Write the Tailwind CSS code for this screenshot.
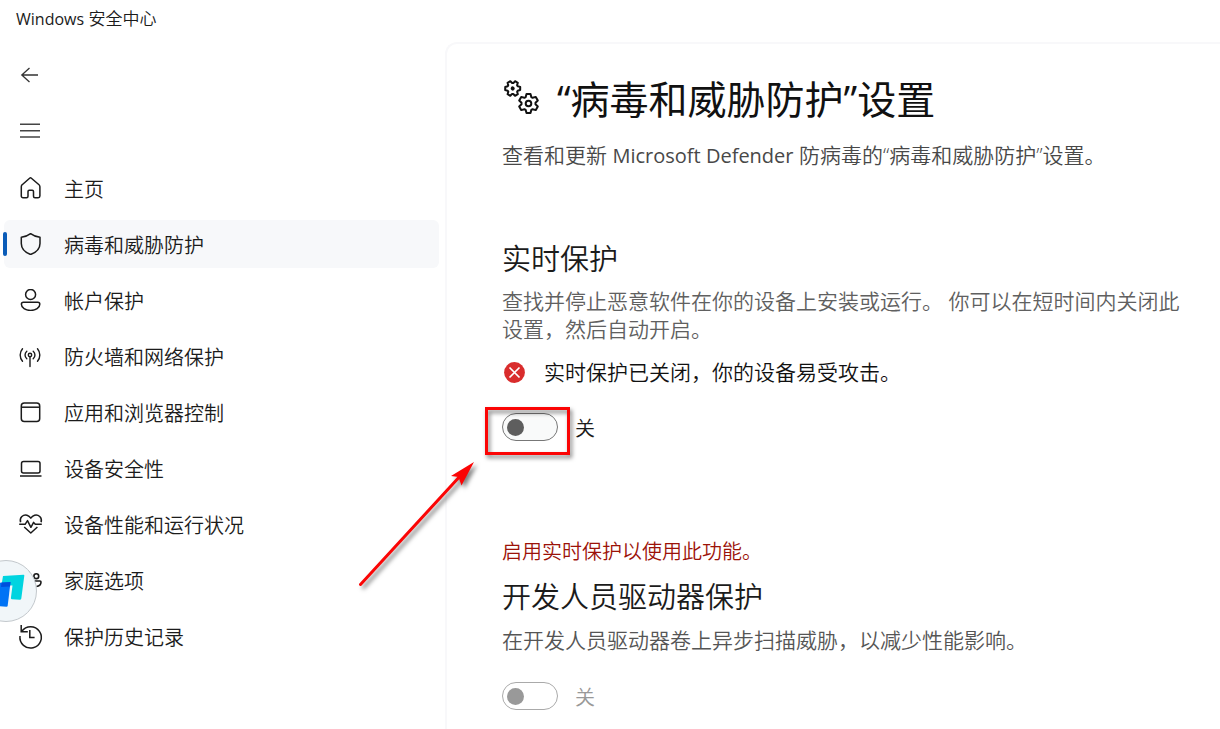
<!DOCTYPE html>
<html lang="zh-CN">
<head>
<meta charset="utf-8">
<meta name="viewport" content="width=device-width, initial-scale=1">
<title>Windows 安全中心</title>
<script src="https://cdn.jsdelivr.net/npm/@tailwindcss/browser@4"></script>
</head>
<body class="relative flex min-h-screen flex-col overflow-x-hidden bg-white font-['Open_Sans','Noto_Sans_CJK_SC',sans-serif] font-[350] text-[#1b1b1b]">
<header class="flex h-[38px] shrink-0 items-center px-4 text-[17px]"><p><span class="text-base font-normal">Windows</span> 安全中心</p></header>
<div class="flex flex-1">
  <aside class="flex w-[445px] shrink-0 flex-col gap-2 pt-[13px] pr-1.5 pl-1 text-[20px]">
    <button type="button" aria-label="返回" class="flex h-12 w-14 items-center px-4">
      <svg class="h-[22px] w-[22px]" viewBox="0 0 22 22" fill="none" stroke="#333" stroke-width="1.3"><path d="M18 11H1.5M9.500 4L1.800 11l7.700 7"/></svg>
    </button>
    <button type="button" aria-label="菜单" class="flex h-12 w-14 items-center px-4">
      <svg class="h-[22px] w-[22px]" viewBox="0 0 22 22" fill="none" stroke="#444" stroke-width="1.4"><path d="M0 4.200h20M0 10.700h20M0 17h20"/></svg>
    </button>
    <nav class="mt-px flex flex-col gap-2">
      <a href="#" class="flex h-12 items-center gap-[22px] rounded-md px-4">
        <svg class="h-[22px] w-[22px]" viewBox="0 0 22 22" fill="none" stroke="currentColor" stroke-width="1.5" stroke-linejoin="round"><path d="M9.600 1.200a1.400 1.400 0 0 1 1.800 0L19 7.700c.6.5.9 1.200.9 2v9.300a1.700 1.700 0 0 1-1.700 1.700h-3.200a1.500 1.500 0 0 1-1.500-1.500v-4.700a1.200 1.200 0 0 0-1.200-1.200H9.200A1.200 1.200 0 0 0 8 14.500v4.700a1.500 1.500 0 0 1-1.500 1.500H3a1.700 1.700 0 0 1-1.700-1.700V9.700c0-.8.3-1.500.9-2z"/></svg>
        <span class="mt-1">主页</span>
      </a>
      <a href="#" aria-current="page" class="relative flex h-12 items-center gap-[22px] rounded-md bg-[#f7f8fa] px-4 before:absolute before:top-3 before:-left-px before:h-6 before:w-1 before:rounded-full before:bg-[#0a5cb8]">
        <svg class="h-[22px] w-[22px]" viewBox="0 0 22 22" fill="none" stroke="currentColor" stroke-width="1.500" stroke-linejoin="round"><path d="M10.600.7C13.400 2.800 16.300 4 20 4.300v6.200c0 5.300-3.300 8.700-9.400 11-6-2.300-9.300-5.700-9.300-11V4.300C5 4 7.800 2.800 10.600.7z"/></svg>
        <span class="mt-1">病毒和威胁防护</span>
      </a>
      <a href="#" class="flex h-12 items-center gap-[22px] rounded-md px-4">
        <svg class="h-[22px] w-[22px]" viewBox="0 0 22 22" fill="none" stroke="currentColor" stroke-width="1.500"><circle cx="10.600" cy="5.500" r="5"/><path d="M3.400 13.300h14.400c1.200 0 2 .9 2 2 0 3.600-4 6.100-9.200 6.100s-9.200-2.500-9.200-6.100c0-1.100.8-2 2-2z"/></svg>
        <span class="mt-1">帐户保护</span>
      </a>
      <a href="#" class="flex h-12 items-center gap-[22px] rounded-md px-4">
        <svg class="h-[22px] w-[22px] overflow-visible" viewBox="0 0 22 22" fill="none" stroke="currentColor" stroke-width="1.400" stroke-linecap="round"><circle cx="10" cy="10" r="1.700"/><path d="M10 12v9.500M6.800 13.800a5 5 0 0 1 0-7.600M13.200 13.800a5 5 0 0 0 0-7.600M2.500 16.300a9.700 9.700 0 0 1 0-12.600M17.500 16.300a9.700 9.700 0 0 0 0-12.600"/></svg>
        <span class="mt-1">防火墙和网络保护</span>
      </a>
      <a href="#" class="flex h-12 items-center gap-[22px] rounded-md px-4">
        <svg class="h-[22px] w-[22px]" viewBox="0 0 22 22" fill="none" stroke="currentColor" stroke-width="1.500"><rect x="1.300" y="2" width="18.400" height="18.400" rx="3"/><path d="M1.500 6.200h18"/></svg>
        <span class="mt-1">应用和浏览器控制</span>
      </a>
      <a href="#" class="flex h-12 items-center gap-[22px] rounded-md px-4">
        <svg class="h-[22px] w-[22px]" viewBox="0 0 22 22" fill="none" stroke="currentColor" stroke-width="1.500"><rect x="1.500" y="4.500" width="18.500" height="11.500" rx="2"/><path d="M0 19h21.500"/></svg>
        <span class="mt-1">设备安全性</span>
      </a>
      <a href="#" class="flex h-12 items-center gap-[22px] rounded-md px-4">
        <svg class="h-[22px] w-[22px] overflow-visible" viewBox="0 0 22 22" fill="none" stroke="currentColor" stroke-width="1.500" stroke-linejoin="round"><path d="M.6 9.300C-1 4.200 3.500 1.300 7 2.300c1.800.5 3 1.700 3.800 2.900.8-1.200 2-2.400 3.800-2.900 3.500-1 8 1.900 6.500 7M-.8 11.300h5.900l2.400-3.700 3.400 6.700 2.700-4.900 1.700 1.900h6.500M4.200 14l6.600 6 6.600-6"/></svg>
        <span class="mt-1">设备性能和运行状况</span>
      </a>
      <a href="#" class="flex h-12 items-center gap-[22px] rounded-md px-4">
        <svg class="h-[22px] w-[22px]" viewBox="0 0 22 22" fill="none" stroke="currentColor" stroke-width="1.600"><circle cx="6" cy="5" r="3.200"/><circle cx="16.300" cy="7.200" r="2.400"/><path d="M1 11.500h10v4c0 3-2 5-5 5s-5-2-5-5zM13 12h7c.6 0 1 .4 1 1 0 2.600-1.800 4.200-4.700 4.500"/></svg>
        <span class="mt-1">家庭选项</span>
      </a>
      <a href="#" class="flex h-12 items-center gap-[22px] rounded-md px-4">
        <svg class="h-[22px] w-[22px] overflow-visible" viewBox="0 0 22 22" fill="none" stroke="currentColor" stroke-width="1.500"><path d="M1.800 6.300A10.700 10.700 0 1 1 0 11M1.200 0v6.800h6.600M9.800 5v7.500h4.800"/></svg>
        <span class="mt-1">保护历史记录</span>
      </a>
    </nav>
  </aside>
  <main class="mt-1 min-w-0 flex-1 rounded-tl-xl border-t-2 border-l-2 border-[#f8f8fa] pr-8 pb-4 pl-[55px] text-[21px] leading-7">
    <div class="mt-[27px] flex h-14 items-center gap-[15px]">
      <svg class="mb-1 h-9 w-10 shrink-0" viewBox="0 0 40 36" fill="none" stroke="#111" stroke-width="2" stroke-linejoin="round">
        <g transform="translate(10.700 9.500) rotate(30) scale(.78)" stroke-width="2.600"><path d="M-2-9.600H2L2.800-6.400 4.100-5.700 7.300-6.600 9.300-3 7-.7V.7L9.300 3 7.300 6.600 4.100 5.700 2.800 6.400 2 9.600H-2L-2.800 6.400-4.100 5.700-7.300 6.600-9.300 3-7 .7V-.7L-9.300-3-7.300-6.600-4.100-5.700-2.800-6.400z"/><circle r="1.300"/></g>
        <g transform="translate(26.500 24.500)"><path d="M-2-9.600H2L2.800-6.400 4.100-5.700 7.300-6.600 9.300-3 7-.7V.7L9.300 3 7.300 6.600 4.100 5.700 2.800 6.400 2 9.600H-2L-2.800 6.400-4.100 5.700-7.300 6.600-9.300 3-7 .7V-.7L-9.300-3-7.300-6.600-4.100-5.700-2.800-6.400z"/><circle r="2.800"/></g>
      </svg>
      <h1 class="text-[39px] leading-[56px] font-normal whitespace-nowrap text-[#111]">“病毒和威胁防护”设置</h1>
    </div>
    <p class="mt-3.5 text-[#484848]">查看和更新 <span class="text-[20px] font-normal">Microsoft Defender</span> 防病毒的“病毒和威胁防护”设置。</p>

    <section class="mt-[71px]">
      <h2 class="text-[29px] leading-9">实时保护</h2>
      <p class="mt-2.5 text-[#606060]">查找并停止恶意软件在你的设备上安装或运行。 你可以在短时间内关闭此设置，然后自动开启。</p>
      <p class="mt-[15px] flex items-center gap-[19px] text-[#111]">
        <svg class="ml-0.5 h-[21px] w-[21px] shrink-0" viewBox="0 0 21 21"><circle cx="10.500" cy="10.500" r="10.400" fill="#d92c2c"/><path d="M5.500 5.500l10 10M15.500 5.500l-10 10" stroke="#fff" stroke-width="1.700"/></svg>
        <span>实时保护已关闭，你的设备易受攻击。</span>
      </p>
      <div class="relative mt-[27px] flex items-center gap-[17px] text-[20px]">
        <input id="realtime" type="checkbox" role="switch" class="relative h-7 w-14 appearance-none rounded-full border border-[#777] bg-[#f9fafa] before:absolute before:top-[5px] before:left-1 before:h-[17px] before:w-[17px] before:rounded-full before:bg-[#5e5e5e]">
        <label for="realtime" class="-mb-1">关</label>
        <div class="pointer-events-none absolute -top-1.5 -left-[17px] h-12 w-[85px] border-3 border-[#fb0505] drop-shadow-[2px_3px_2px_rgba(0,0,0,0.5)]"></div>
        <svg class="pointer-events-none absolute top-[38px] -left-[152px] h-[145px] w-[140px] drop-shadow-[3px_3px_2px_rgba(0,0,0,0.5)]" viewBox="350 450 140 145"><path d="M360.500 583.500L462 473" stroke="#fb0505" stroke-width="3" stroke-linecap="round"/><path d="M474 461l-12.500 23.500-3-8.500-7.500-1z" fill="#fb0505"/></svg>
      </div>
    </section>

    <section class="mt-[97px]">
      <p class="text-[20px] text-[#9c1208]">启用实时保护以使用此功能。</p>
      <h2 class="mt-[13px] text-[29px] leading-9">开发人员驱动器保护</h2>
      <p class="mt-[11px] text-[#555]">在开发人员驱动器卷上异步扫描威胁，以减少性能影响。</p>
      <div class="mt-7 flex items-center gap-[17px] text-[20px] text-[#999]">
        <input id="devdrive" type="checkbox" role="switch" disabled class="relative h-7 w-14 appearance-none rounded-full border border-[#aaa] bg-white before:absolute before:top-[5px] before:left-1 before:h-[17px] before:w-[17px] before:rounded-full before:bg-[#999]">
        <label for="devdrive" class="-mb-1">关</label>
      </div>
    </section>
  </main>
</div>
<button type="button" aria-label="悬浮助手" class="absolute top-[560px] -left-[25px] h-[62px] w-[62px] rounded-full border border-[#c3c8cc] bg-[#f1f6f9]">
  <svg class="h-[60px] w-[60px]" viewBox="-24 561 60 60"><path d="M3 576l20.500-1.200a.8.800 0 0 1 .8 1l-3 22.700a1.500 1.500 0 0 1-1.500 1.300l-8-.6a1 1 0 0 1-.9-1.200l1.600-12.500-11-.5z" fill="#00d4e0"/><path d="M-9 583l19.500-.8-2.800 23.500a1.200 1.200 0 0 1-1.200 1L-2 606l-7-1z" fill="#0073f5"/><path d="M1.500 582.500l9-.4-.5 4.400-9 .5z" fill="#004fdc"/></svg>
</button>
</body>
</html>
